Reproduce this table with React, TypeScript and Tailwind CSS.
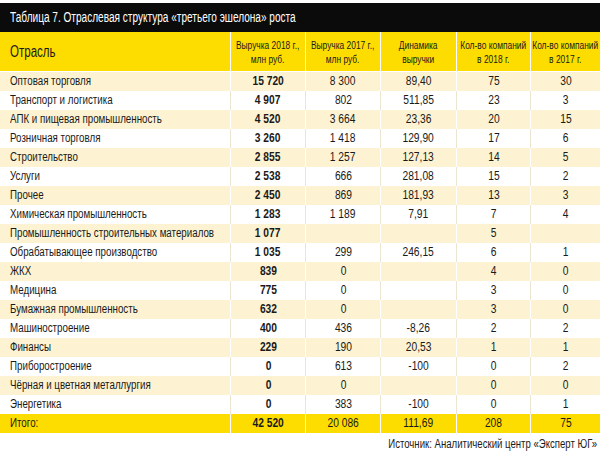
import type { ReactNode } from "react";

const rows: [string, string, string, string, string, string][] = [
  ["Оптовая торговля", "15 720", "8 300", "89,40", "75", "30"],
  ["Транспорт и логистика", "4 907", "802", "511,85", "23", "3"],
  ["АПК и пищевая промышленность", "4 520", "3 664", "23,36", "20", "15"],
  ["Розничная торговля", "3 260", "1 418", "129,90", "17", "6"],
  ["Строительство", "2 855", "1 257", "127,13", "14", "5"],
  ["Услуги", "2 538", "666", "281,08", "15", "2"],
  ["Прочее", "2 450", "869", "181,93", "13", "3"],
  ["Химическая промышленность", "1 283", "1 189", "7,91", "7", "4"],
  ["Промышленность строительных материалов", "1 077", "", "", "5", ""],
  ["Обрабатывающее производство", "1 035", "299", "246,15", "6", "1"],
  ["ЖКХ", "839", "0", "", "4", "0"],
  ["Медицина", "775", "0", "", "3", "0"],
  ["Бумажная промышленность", "632", "0", "", "3", "0"],
  ["Машиностроение", "400", "436", "-8,26", "2", "2"],
  ["Финансы", "229", "190", "20,53", "1", "1"],
  ["Приборостроение", "0", "613", "-100", "0", "2"],
  ["Чёрная и цветная металлургия", "0", "0", "", "0", "0"],
  ["Энергетика", "0", "383", "-100", "0", "1"],
];

const grid = "grid grid-cols-[231px_75px_75px_76px_74px_1fr]";

// narrow text: the original uses a condensed face, so squeeze Liberation Sans
const Nl = ({ children }: { children: ReactNode }) => (
  <span className="inline-block whitespace-nowrap origin-left scale-x-[0.78]">{children}</span>
);
const Nc = ({ children }: { children: ReactNode }) => (
  <span className="inline-block whitespace-nowrap origin-center scale-x-[0.82]">{children}</span>
);
const Nh = ({ children }: { children: ReactNode }) => (
  <span className="inline-block whitespace-nowrap text-center origin-center scale-x-[0.8]">{children}</span>
);

export default function App() {
  return (
    <div
      className="w-[600px] h-[459px] bg-white pt-[3px] text-[#1a1a1a]"
      style={{ fontFamily: '"Liberation Sans", Arial, sans-serif' }}
    >
      {/* Title */}
      <div className="h-[29px] bg-[#0b0b0b] flex items-center pl-[10px] text-white text-[14px]">
        <span className="inline-block whitespace-nowrap origin-left scale-x-[0.72]">
          Таблица 7. Отраслевая структура «третьего эшелона» роста
        </span>
      </div>

      {/* Header */}
      <div className={`${grid} h-[40px] bg-[#fddd00] border-b border-white`}>
        <div className="flex items-center pl-[10px] text-[16px] border-r border-white">
          <span className="inline-block origin-left scale-x-[0.72]">Отрасль</span>
        </div>
        <div className="flex items-center justify-center overflow-hidden text-[10.5px] leading-[14px] border-r border-white">
          <Nh>Выручка 2018 г.,<br />млн руб.</Nh>
        </div>
        <div className="flex items-center justify-center overflow-hidden text-[10.5px] leading-[14px] border-r border-white">
          <Nh>Выручка 2017 г.,<br />млн руб.</Nh>
        </div>
        <div className="flex items-center justify-center overflow-hidden text-[10.5px] leading-[14px] border-r border-white">
          <Nh>Динамика<br />выручки</Nh>
        </div>
        <div className="flex items-center justify-center overflow-hidden text-[10.5px] leading-[14px] border-r border-white">
          <Nh>Кол-во компаний<br />в 2018 г.</Nh>
        </div>
        <div className="flex items-center justify-center overflow-hidden text-[10.5px] leading-[14px]">
          <Nh>Кол-во компаний<br />в 2017 г.</Nh>
        </div>
      </div>

      {/* Rows */}
      {rows.map((r, i) => {
        const cream = i % 2 === 0;
        const line = cream ? "border-white" : "border-[#ebe6d2]";
        return (
          <div key={r[0]} className={`${grid} h-[19px] text-[12.5px] ${cream ? "bg-[#fdf3d2]" : "bg-white"}`}>
            <div className={`flex items-center pl-[10px] border-r ${line}`}><Nl>{r[0]}</Nl></div>
            <div className={`flex items-center justify-center font-bold border-r ${line}`}><Nc>{r[1]}</Nc></div>
            <div className={`flex items-center justify-center border-r ${line}`}><Nc>{r[2]}</Nc></div>
            <div className={`flex items-center justify-center border-r ${line}`}><Nc>{r[3]}</Nc></div>
            <div className={`flex items-center justify-center border-r ${line}`}><Nc>{r[4]}</Nc></div>
            <div className="flex items-center justify-center"><Nc>{r[5]}</Nc></div>
          </div>
        );
      })}

      {/* Total */}
      <div className={`${grid} h-[19px] text-[12.5px] bg-[#fddd00]`}>
        <div className="flex items-center pl-[10px] border-r border-white"><Nl>Итого:</Nl></div>
        <div className="flex items-center justify-center font-bold border-r border-white"><Nc>42 520</Nc></div>
        <div className="flex items-center justify-center border-r border-white"><Nc>20 086</Nc></div>
        <div className="flex items-center justify-center border-r border-white"><Nc>111,69</Nc></div>
        <div className="flex items-center justify-center border-r border-white"><Nc>208</Nc></div>
        <div className="flex items-center justify-center"><Nc>75</Nc></div>
      </div>

      {/* Source */}
      <div className="flex justify-end pr-[3px] pt-[2px] text-[12px]">
        <span className="inline-block whitespace-nowrap origin-right scale-x-[0.8]">
          Источник: Аналитический центр «Эксперт ЮГ»
        </span>
      </div>
    </div>
  );
}
